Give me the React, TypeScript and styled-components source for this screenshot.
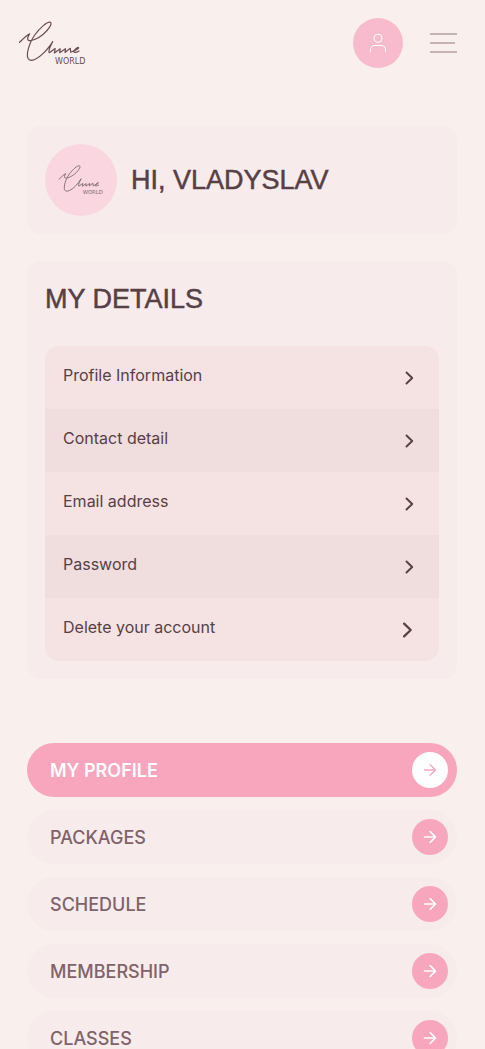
import React from "react";
import styled, { createGlobalStyle } from "styled-components";

const GlobalStyle = createGlobalStyle`
  *, *::before, *::after { box-sizing: border-box; }
  html { scrollbar-width: none; }
  body {
    margin: 0;
    background: #f9f0ee;
    color: #573f46;
    font-family: Inter, "Liberation Sans", sans-serif;
  }
  a { color: inherit; text-decoration: none; }
  button { font: inherit; color: inherit; border: 0; padding: 0; background: none; cursor: pointer; }
`;

const Page = styled.div`
  min-height: 100vh;
  padding-bottom: 27px;
`;

const Header = styled.header`
  display: flex;
  align-items: center;
  justify-content: space-between;
  height: 86px;
  padding: 0 28px 0 18px;
`;

const HomeLink = styled.a`
  display: flex;
`;

const HeaderActions = styled.div`
  display: flex;
  align-items: center;
  gap: 27px;
`;

const ProfileButton = styled.button`
  display: grid;
  place-items: center;
  width: 50px;
  height: 50px;
  border-radius: 50%;
  background: #f8bbce;
  color: #fff;
`;

const MenuButton = styled.button`
  display: flex;
`;

const Main = styled.main`
  display: flex;
  flex-direction: column;
  gap: 27px;
  padding: 40px 28px 0 27px;
`;

const Card = styled.section`
  padding: 18px;
  border-radius: 14px;
  background: #f8ebeb;
`;

const GreetingCard = styled(Card)`
  display: flex;
  align-items: center;
  gap: 14px;
`;

const Avatar = styled.div`
  display: grid;
  place-items: center;
  flex: none;
  width: 72px;
  height: 72px;
  border-radius: 50%;
  background: #fad7e0;
`;

const Title = styled.h1`
  margin: 0;
  font-family: "Liberation Sans", Arial, sans-serif;
  font-size: 27px;
  line-height: 40px;
  font-weight: 500;
  text-transform: uppercase;
  -webkit-text-stroke: 0.5px currentColor;
`;

const DetailList = styled.ul`
  list-style: none;
  margin: 27px 0 0;
  padding: 0;
  border-radius: 14px;
  overflow: hidden;
`;

const DetailItem = styled.li`
  background: #f5e2e2;
  &:nth-child(even) { background: #f0dddd; }
`;

const DetailLink = styled.a`
  display: flex;
  justify-content: space-between;
  align-items: center;
  height: 63px;
  padding: 0 18px;
  font-size: 16px;
  line-height: 24px;
`;

const DetailLabel = styled.span`
  padding-bottom: 5px;
`;

const Nav = styled.nav`
  display: flex;
  flex-direction: column;
  gap: 13px;
  margin-top: 37px;
`;

const NavLink = styled.a<{ $active: boolean }>`
  display: flex;
  align-items: center;
  justify-content: space-between;
  height: 54px;
  padding: 0 9px 0 23px;
  border-radius: 27px;
  font-size: 18px;
  font-weight: ${(p) => (p.$active ? 600 : 500)};
  text-transform: uppercase;
  background: ${(p) => (p.$active ? "#f8a5be" : "#f8ebeb")};
  color: ${(p) => (p.$active ? "#fff" : "#80626a")};
`;

const ArrowBadge = styled.span<{ $active: boolean }>`
  display: grid;
  place-items: center;
  width: 36px;
  height: 36px;
  border-radius: 50%;
  background: ${(p) => (p.$active ? "#fff" : "#f8a5be")};
  color: ${(p) => (p.$active ? "#f8a5be" : "#fff")};
`;

function Logo({ width, color, stroke }: { width: number; color: string; stroke: number }) {
  return (
    <svg width={width} viewBox="18 20 69 45" role="img" aria-label="World" fill="none">
      <path
        d="M19.5 41.3C22.5 38.5 26.500 34.500 29.600 32.800C27.800 35.400 26.800 38.800 28.700 39.400C31.500 40.500 38.500 37.200 43 33.500C48.500 29 52.600 22.500 50.400 21.300C47.600 19.800 39.500 27.400 34.700 34C29.500 41.200 26 52.500 28 57.300C30.200 62 38.500 57.500 44 51.700C47.500 48 50.500 44.500 52.700 40.600C51 44 47.600 49.700 49.300 51.700L55.200 47.600L54.400 51.900L60.200 47.800L59.700 51.700L65.500 47.700L65 51.500L70.300 47.300L70.700 51.200C73.200 50.800 74.800 48.500 76.600 47.200C78.500 45.800 79.500 46.700 77.600 48C75.800 49.300 74 49.400 73.700 50.400C73.800 52.200 77 51.400 79 50"
        stroke={color}
        strokeWidth={stroke}
        strokeLinecap="round"
        strokeLinejoin="round"
      />
      <text x="55" y="63" fontSize="8" fill={color} fontFamily="'DejaVu Sans', sans-serif">
        WORLD
      </text>
    </svg>
  );
}

function UserIcon() {
  return (
    <svg width="18" height="20" viewBox="0 0 18 20" fill="none" stroke="currentColor" strokeWidth="1.1" strokeLinecap="round" aria-hidden="true">
      <circle cx="9" cy="5.2" r="4" />
      <path d="M1.5 18.8V17a4.500 4.500 0 0 1 4.500-4.500h6a4.500 4.500 0 0 1 4.500 4.500v1.800" />
    </svg>
  );
}

function MenuIcon() {
  return (
    <svg width="27" height="20" viewBox="0 0 27 20" fill="none" stroke="#c6b3b5" strokeWidth="1.8" aria-hidden="true">
      <path d="M0 1H27M0 10H25M0 19H27" />
    </svg>
  );
}

function Chevron({ large }: { large: boolean }) {
  const size = large ? 28 : 24;
  return (
    <svg width={size} height={size} viewBox="0 0 24 24" fill="none" stroke="currentColor" strokeWidth="1.9" strokeLinecap="round" strokeLinejoin="round" aria-hidden="true">
      <path d="M9.5 6.5 15.2 12 9.5 17.5" />
    </svg>
  );
}

function Arrow({ thin }: { thin: boolean }) {
  return (
    <svg width="20" height="20" viewBox="0 0 20 20" fill="none" stroke="currentColor" strokeWidth={thin ? 1.3 : 1.7} strokeLinecap="round" strokeLinejoin="round" aria-hidden="true">
      <path d="M4.5 10H15.5M10.2 4.7 15.5 10l-5.3 5.3" />
    </svg>
  );
}

const details = ["Profile Information", "Contact detail", "Email address", "Password", "Delete your account"];
const sections = ["My profile", "Packages", "Schedule", "Membership", "Classes"];

export default function App() {
  return (
    <Page>
      <GlobalStyle />
      <Header>
        <HomeLink href="#home">
          <Logo width={69} color="#6b4c54" stroke={1.2} />
        </HomeLink>
        <HeaderActions>
          <ProfileButton aria-label="Profile">
            <UserIcon />
          </ProfileButton>
          <MenuButton aria-label="Menu">
            <MenuIcon />
          </MenuButton>
        </HeaderActions>
      </Header>
      <Main>
        <GreetingCard>
          <Avatar>
            <Logo width={46} color="#806a70" stroke={1.4} />
          </Avatar>
          <Title>Hi, Vladyslav</Title>
        </GreetingCard>
        <Card>
          <Title as="h2">My details</Title>
          <DetailList>
            {details.map((label, i) => (
              <DetailItem key={label}>
                <DetailLink href={`#detail-${i + 1}`}>
                  <DetailLabel>{label}</DetailLabel>
                  <Chevron large={i === details.length - 1} />
                </DetailLink>
              </DetailItem>
            ))}
          </DetailList>
        </Card>
        <Nav aria-label="Account">
          {sections.map((label, i) => (
            <NavLink key={label} href={`#section-${i + 1}`} $active={i === 0} aria-current={i === 0 ? "page" : undefined}>
              {label}
              <ArrowBadge $active={i === 0}>
                <Arrow thin={i === 0} />
              </ArrowBadge>
            </NavLink>
          ))}
        </Nav>
      </Main>
    </Page>
  );
}
